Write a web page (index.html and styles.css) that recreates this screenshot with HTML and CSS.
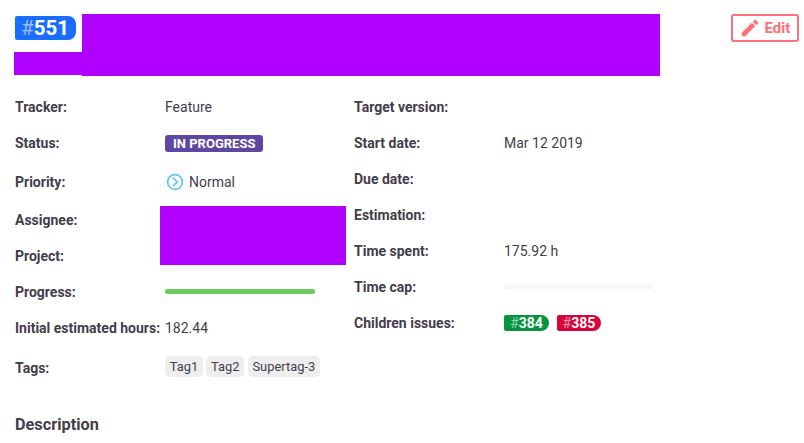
FILE: index.html
```html
<!DOCTYPE html>
<html lang="en"><head><meta charset="utf-8"><title>Issue #551</title><link rel="stylesheet" href="styles.css"></head>
<body>
<header class="header">
<div class="title"><div class="title-side"><span class="issue-id"><span class="hash">#</span>551</span><div class="redacted-tail"></div></div><div class="redacted-title"></div></div>
<button class="edit"><svg width="22" height="22" viewBox="0 0 24 24"><path d="M3 17.25V21h3.75L17.81 9.94l-3.75-3.75L3 17.25zM20.71 7.04a1 1 0 0 0 0-1.41l-2.34-2.34a1 1 0 0 0-1.41 0l-1.83 1.83 3.75 3.75 1.83-1.83z" fill="currentColor"/></svg>Edit</button>
</header>
<main class="details">
<div class="column left">
<div class="row"><b>Tracker:</b><span>Feature</span></div>
<div class="row"><b>Status:</b><span class="status">IN PROGRESS</span></div>
<div class="row priority"><b>Priority:</b><svg width="20" height="20" viewBox="0 0 20 20" fill="none" stroke="#5bc5f7" stroke-width="1.7"><circle cx="10" cy="10" r="7.4"/><path d="M8 5.8L12.2 10 8 14.2"/></svg><span class="normal">Normal</span></div>
<div class="people"><div class="people-labels"><div class="row"><b>Assignee:</b></div><div class="row"><b>Project:</b></div></div><div class="redacted-people"></div></div>
<div class="row"><b>Progress:</b><span class="bar done"></span></div>
<div class="row"><b>Initial estimated hours:</b><span>182.44</span></div>
<div class="row tags"><b>Tags:</b><span class="tag">Tag1</span><span class="tag">Tag2</span><span class="tag">Supertag-3</span></div>
</div>
<div class="column">
<div class="row"><b>Target version:</b></div>
<div class="row"><b>Start date:</b><span>Mar 12 2019</span></div>
<div class="row"><b>Due date:</b></div>
<div class="row"><b>Estimation:</b></div>
<div class="row"><b>Time spent:</b><span>175.92 h</span></div>
<div class="row"><b>Time cap:</b><span class="bar"></span></div>
<div class="row"><b>Children issues:</b><span class="child green"><span class="hash">#</span>384</span><span class="child red"><span class="hash">#</span>385</span></div>
</div>
</main>
<h2>Description</h2>
</body></html>
```
FILE: styles.css
```css
* { box-sizing: border-box; }
body { margin: 0; padding: 14px 5px 0 14px; background: #fff; color: #443d4b; font: 14px/20px Roboto, sans-serif; }
b { font-weight: 700; width: 150px; flex: none; white-space: nowrap; }
.header { display: flex; justify-content: space-between; height: 75px; }
.title { display: flex; }
.title-side { width: 68px; }
.issue-id { display: block; width: 61px; height: 24px; margin: 2px 0 12px 1px; padding-left: 6px; border-radius: 2px 8px 8px 2px; background: #1b6dff; color: #fff; font: 700 20.5px/24px Roboto, sans-serif; }
.hash { opacity: .55; font-weight: 400; }
.redacted-tail { width: 68px; height: 23px; background: #b000ff; }
.redacted-title { width: 578px; height: 62px; background: #b000ff; }
.edit { display: flex; align-items: center; gap: 3.5px; width: 68px; height: 28px; padding: 0 0 0 6px; border: 2px solid #ff7079; border-radius: 3px; background: #fff; color: #ff7079; font: 700 15px/20px Roboto, sans-serif; }
.details { display: flex; padding-left: 1px; }
.column { width: 339px; }
.row { display: flex; align-items: center; height: 36px; }
.left .priority { height: 41px; padding-top: 1px; }
.status { height: 17px; padding: 0 8px; border-radius: 3px; background: #6046a3; color: #fff; font: 700 13px/17px Roboto, sans-serif; }
.normal { margin-left: 4px; }
.people { display: flex; height: 72px; }
.people-labels { width: 145px; }
.redacted-people { width: 186px; height: 59px; margin-top: 4px; background: #b000ff; }
.bar { width: 150px; height: 5px; margin-bottom: 2px; border-radius: 3px; background: #f8f8f8; }
.done { background: #6bcb5c; }
.left .tags { height: 44px; }
.tag { height: 21px; margin: 0 3.5px 4px 0; padding: 0 4.7px; border-radius: 5px; background: #eee; font-size: 12.9px; line-height: 21px; }
.child { height: 16px; width: 45px; margin-right: 8px; padding-left: 6px; border-radius: 2px 8px 8px 2px; color: #fff; font-weight: 700; line-height: 16px; }
.green { background: #069440; }
.red { width: 44px; padding-left: 5.5px; background: #d6063b; }
h2 { margin: 24px 0 0 1px; font-size: 16.3px; line-height: 22px; font-weight: 700; }
```
